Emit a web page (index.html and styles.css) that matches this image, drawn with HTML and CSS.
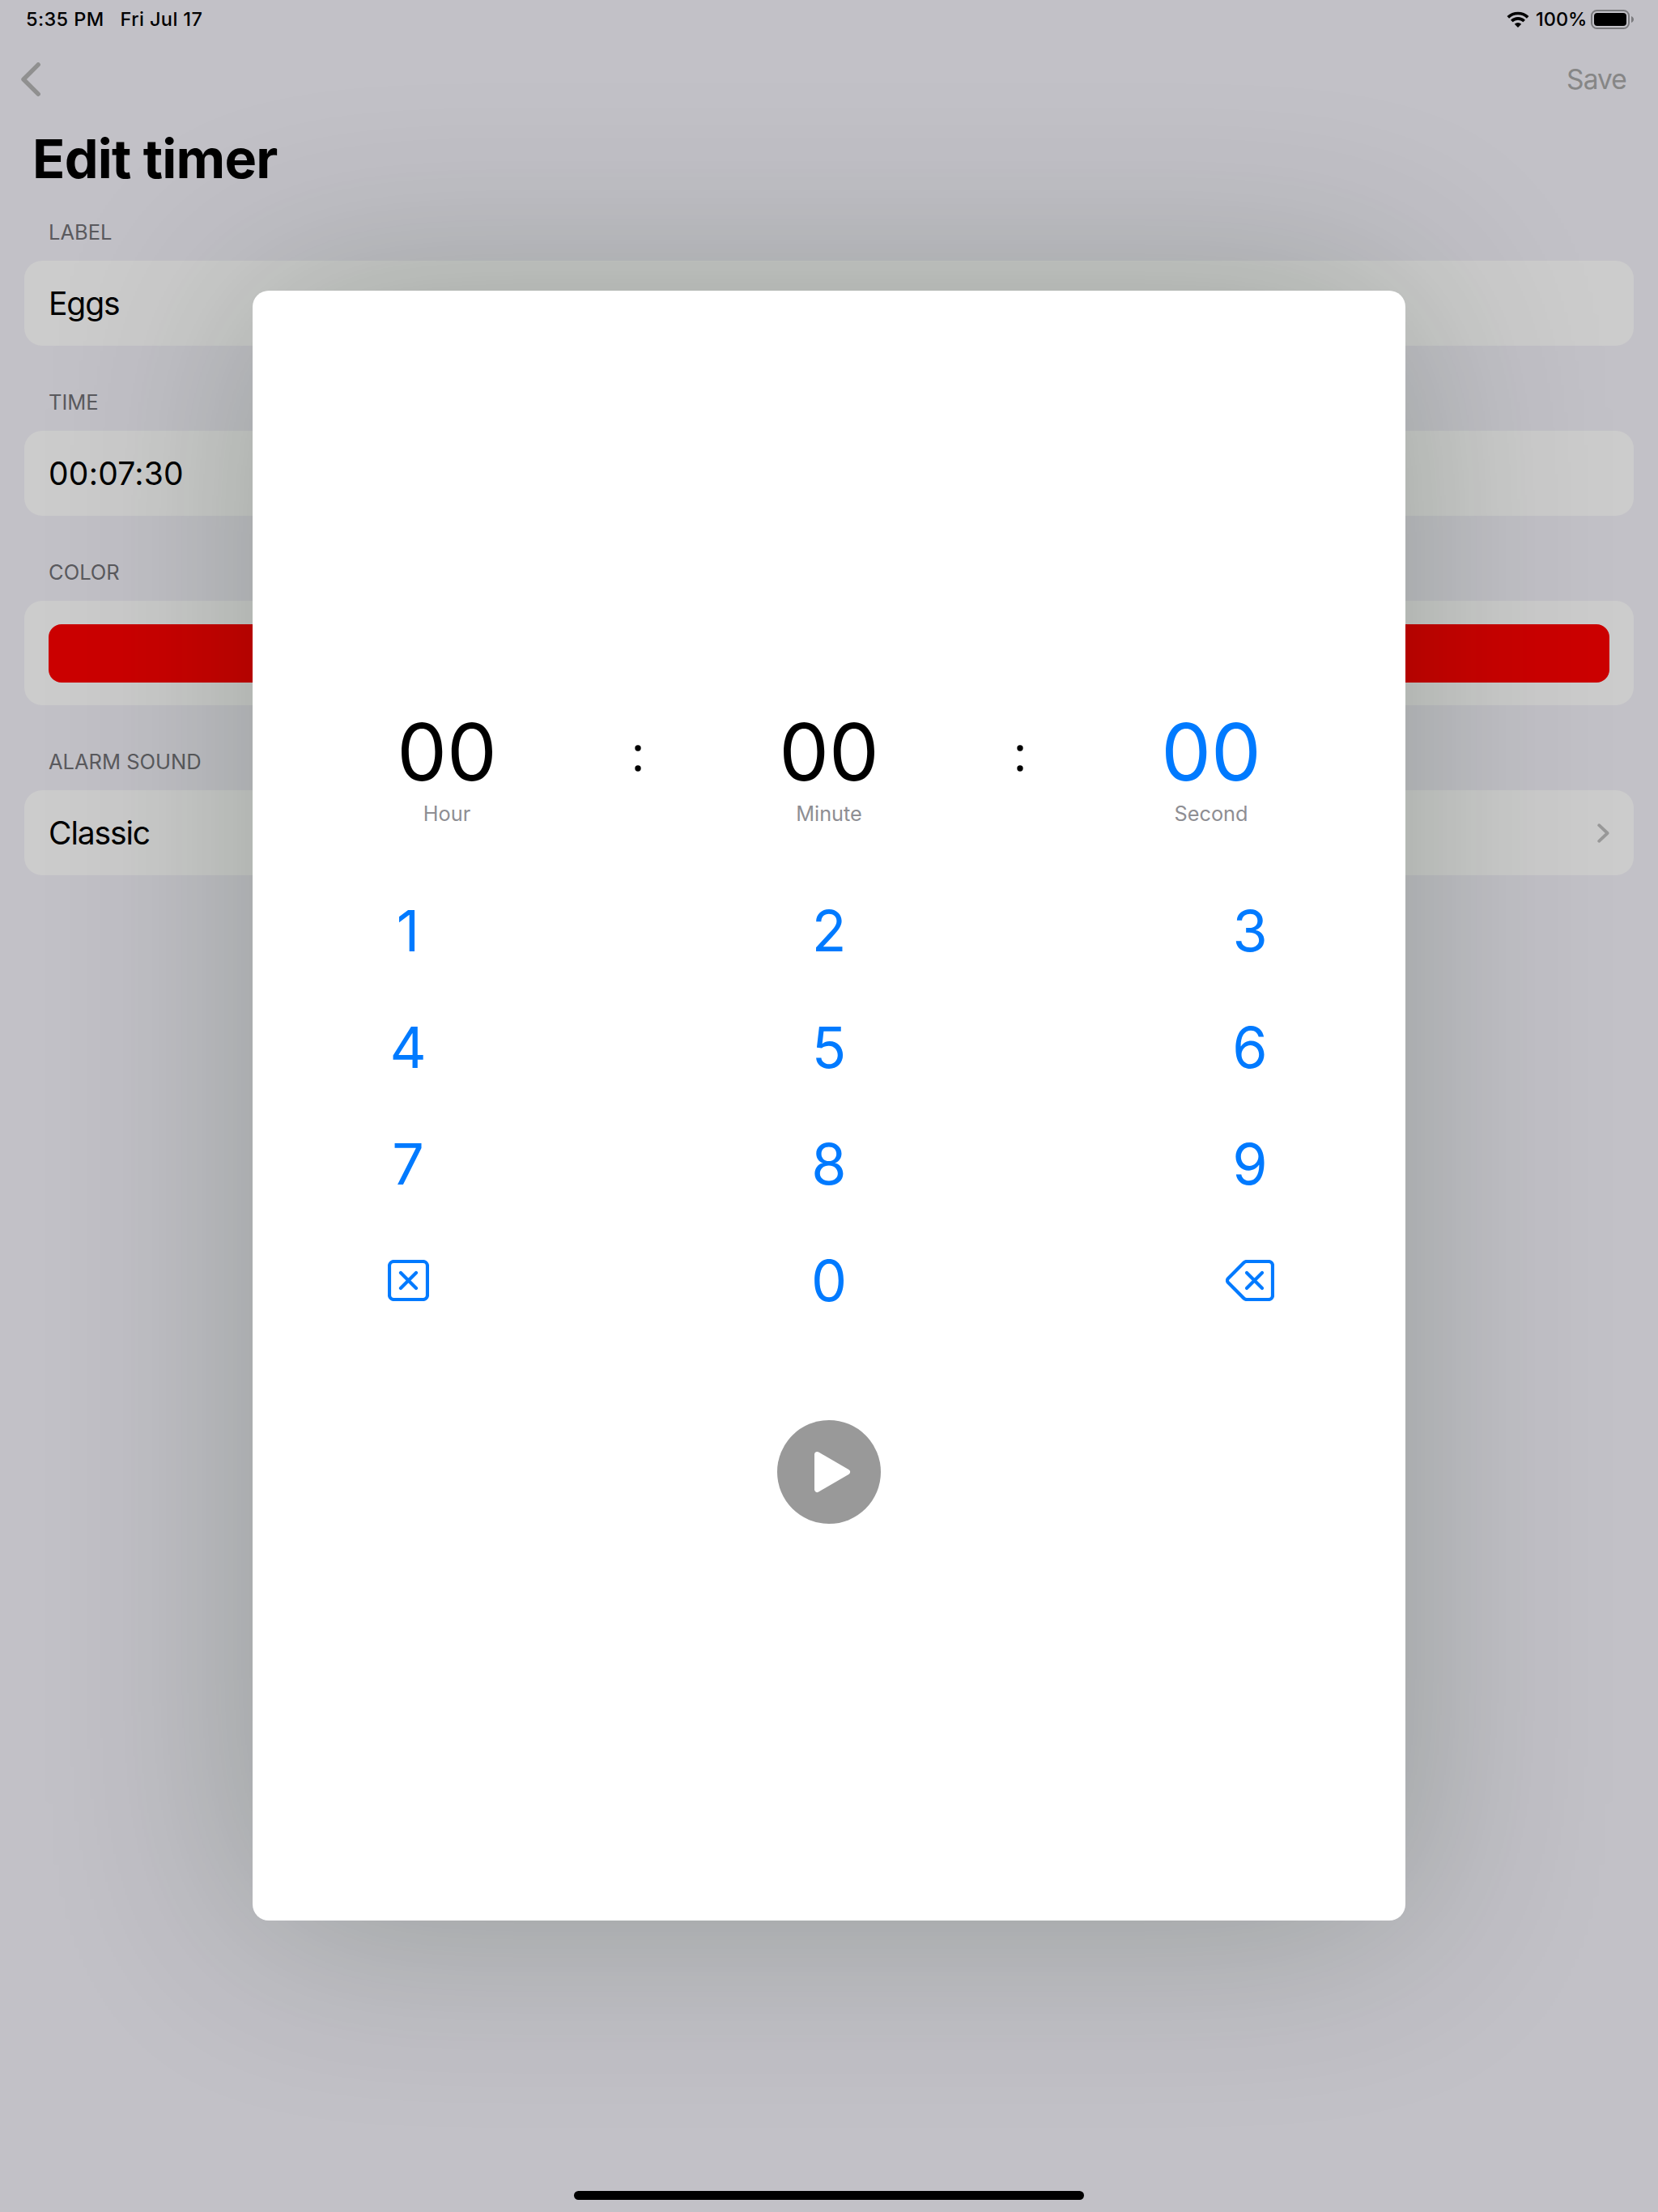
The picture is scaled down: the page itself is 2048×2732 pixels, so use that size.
FILE: index.html
```html
<!DOCTYPE html>
<html lang="en">
<head>
<meta charset="utf-8">
<title>Edit timer</title>
<link rel="stylesheet" href="styles.css">
</head>
<body>
<div class="screen">
  <header class="status">
    <div class="status-left"><span class="clock">5:35 PM</span><span class="date">Fri Jul 17</span></div>
    <div class="status-right">
      <svg class="wifi" width="28" height="20" viewBox="0 0 28 20">
        <path d="M1.8 7.4A17.6 17.6 0 0 1 26.2 7.4M6.3 12A11.1 11.1 0 0 1 21.7 12" fill="none" stroke="#000" stroke-width="3.7"/>
        <path d="M14 20l-4.2-4.2a6 6 0 0 1 8.4 0z"/>
      </svg>
      <span class="percent">100%</span>
      <svg class="battery" width="54" height="24" viewBox="0 0 54 24">
        <rect x="1" y="1" width="46" height="22" rx="6.5" fill="none" stroke="#7a7a7d" stroke-width="2"/>
        <rect x="4" y="4" width="40" height="16" rx="4"/>
        <path d="M50 8c4 1.500 4 6.500 0 8z" fill="#7a7a7d"/>
      </svg>
    </div>
  </header>
  <nav class="nav">
    <svg class="back" width="24" height="42" viewBox="0 0 24 42"><path d="M21.200 2.800L3 21l18.200 18.200" fill="none" stroke="#909090" stroke-width="5.400" stroke-linecap="round" stroke-linejoin="round"/></svg>
    <span class="save">Save</span>
  </nav>
  <h1 class="title">Edit timer</h1>
  <main class="form">
    <section>
      <h2 class="caption">LABEL</h2>
      <div class="card"><span class="value">Eggs</span></div>
    </section>
    <section>
      <h2 class="caption">TIME</h2>
      <div class="card"><span class="value value-time">00:07:30</span></div>
    </section>
    <section>
      <h2 class="caption">COLOR</h2>
      <div class="card card-color"><div class="swatch"></div></div>
    </section>
    <section>
      <h2 class="caption">ALARM SOUND</h2>
      <div class="card"><span class="value">Classic</span>
        <svg width="15" height="24" viewBox="0 0 15 24"><path d="M2.200 2.200L12.600 12 2.200 21.800" fill="none" stroke="#999" stroke-width="3.800" stroke-linecap="round" stroke-linejoin="round"/></svg>
      </div>
    </section>
  </main>
  <div class="home"></div>

  <div class="modal">
    <div class="picker">
      <div class="unit"><span class="digits">00</span><span class="name">Hour</span></div>
      <svg class="colon" width="8" height="33" viewBox="0 0 8 33"><circle cx="4" cy="4" r="3.700"/><circle cx="4" cy="29" r="3.700"/></svg>
      <div class="unit"><span class="digits">00</span><span class="name">Minute</span></div>
      <svg class="colon" width="8" height="33" viewBox="0 0 8 33"><circle cx="4" cy="4" r="3.700"/><circle cx="4" cy="29" r="3.700"/></svg>
      <div class="unit active"><span class="digits">00</span><span class="name">Second</span></div>
    </div>
    <div class="keypad">
      <span>1</span><span>2</span><span>3</span>
      <span>4</span><span>5</span><span>6</span>
      <span>7</span><span>8</span><span>9</span>
      <span><svg width="51" height="51" viewBox="0 0 51 51"><rect x="2" y="2" width="47" height="47" rx="5.500"/><path d="M16 16l19 19M35 16L16 35"/></svg></span>
      <span>0</span>
      <span><svg width="60" height="51" viewBox="0 0 60 51"><path d="M26 2H53a5 5 0 0 1 5 5V44a5 5 0 0 1-5 5H26a5 5 0 0 1-3.600-1.500L3 28a3.500 3.500 0 0 1 0-5L22.400 3.500A5 5 0 0 1 26 2z"/><path d="M26 16l19 19M45 16L26 35"/></svg></span>
    </div>
    <div class="play">
      <svg width="128" height="128" viewBox="0 0 128 128"><circle cx="64" cy="64" r="64" fill="#999"/><path d="M49.500 42.500L86.500 64 49.500 85.500z" fill="#fff" stroke="#fff" stroke-width="7" stroke-linejoin="round"/></svg>
    </div>
  </div>
</div>
</body>
</html>
```
FILE: styles.css
```css
* { box-sizing: border-box; }
body { margin: 0; font-family: Inter, "Liberation Sans", sans-serif; color: #000; }
h1, h2 { margin: 0; font-weight: 400; }
svg { display: block; flex: none; }
.screen { position: relative; width: 2048px; height: 2732px; overflow: hidden; background: #c2c1c7; display: flex; flex-direction: column; white-space: nowrap; }

.status { height: 48px; padding: 0 29px 1px 32px; display: flex; justify-content: space-between; align-items: center; font-size: 23.5px; font-weight: 500; }
.status-left { display: flex; gap: 20px; letter-spacing: .4px; }
.status-right { display: flex; align-items: center; }
.percent { margin: 0 5px 0 8px; width: 63px; }

.nav { height: 100px; padding: 0 39px 0 26px; display: flex; justify-content: space-between; align-items: center; }
.save { font-size: 33.500px; letter-spacing: -.9px; color: #868686; }

.title { height: 96px; line-height: 96px; padding-left: 40px; font-size: 66.500px; font-weight: 700; letter-spacing: -.75px; }

.form { padding: 0 30px; margin-top: -27px; flex: 1; }
.caption { padding: 55px 30px 20px; height: 105px; line-height: 30px; font-size: 25.500px; color: #5a5a5e; }
.card { height: 105px; padding: 0 30px; border-radius: 22px; background: #ccc; display: flex; align-items: center; justify-content: space-between; font-size: 39px; }
.value { letter-spacing: -1.1px; }
.value-time { letter-spacing: .25px; }
.card-color { height: 129px; }
.swatch { flex: 1; height: 72px; border-radius: 16px; background: #c00; }

.home { width: 630px; height: 11px; margin: 0 auto 15px; border-radius: 6px; background: #000; }

/* sheet floating over the dimmed form */
.modal { position: absolute; left: 312px; top: 359px; width: 1424px; height: 2013px; border-radius: 20px; background: #fff; box-shadow: 0 0 255px rgba(0, 34, 0, .24); display: flex; flex-direction: column; align-items: center; padding-top: 510px; }
.picker { display: grid; grid-template-columns: repeat(5, 236px); height: 208px; }
.unit { display: flex; flex-direction: column; align-items: center; }
.digits { font-size: 98px; line-height: 120px; }
.active .digits { color: #007aff; }
.name { font-size: 25.300px; line-height: 32px; color: #8e8e93; }
.colon { justify-self: center; margin-top: 51px; }
.keypad { display: grid; grid-template-columns: repeat(3, 520px); grid-auto-rows: 144px; font-size: 70px; color: #007aff; }
.keypad span { display: flex; align-items: center; justify-content: center; }
.keypad svg { fill: none; stroke: #007aff; stroke-width: 4.200; stroke-linecap: round; stroke-linejoin: round; }
.play { margin-top: 101px; }
```
